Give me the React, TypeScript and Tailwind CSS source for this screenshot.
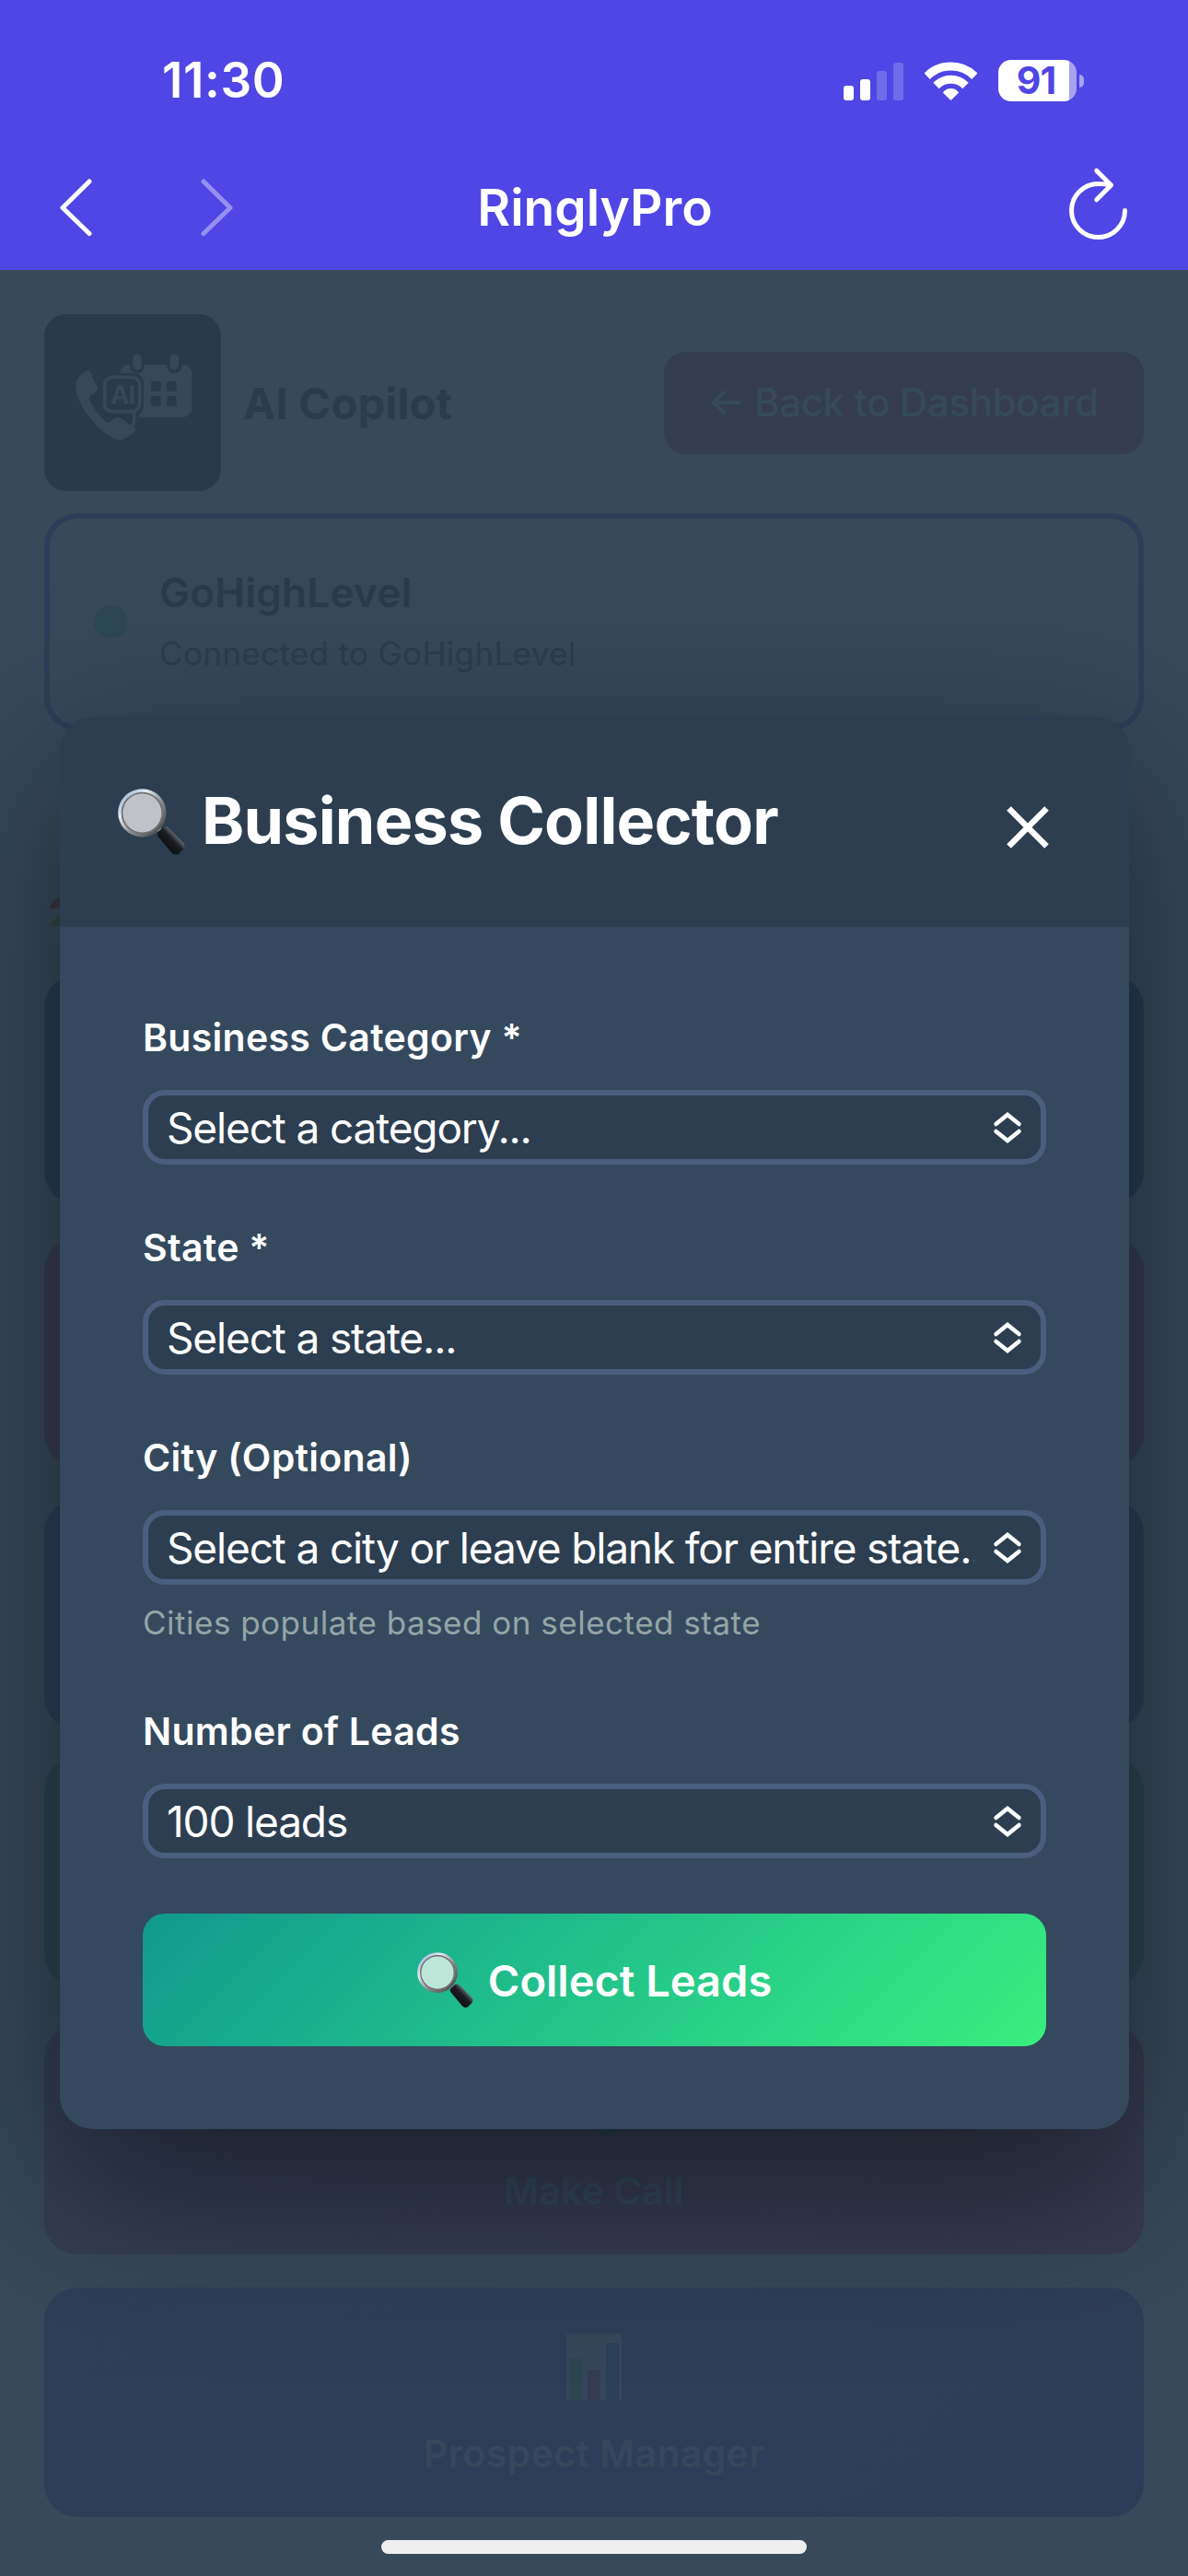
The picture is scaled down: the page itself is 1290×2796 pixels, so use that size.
import type { ReactNode } from 'react'

function StatusBar() {
  return (
    <div className="flex h-[174px] shrink-0 items-center justify-between pt-px pl-[176px] pr-[113px] text-white">
      <span className="text-[53px] leading-none font-semibold tracking-[0.6px]">11:30</span>
      <div className="flex items-center">
        <svg width="66" height="42" viewBox="0 0 66 42" fill="currentColor">
          <rect x="0" y="26" width="11" height="16" rx="3" />
          <rect x="18" y="19" width="11" height="23" rx="3" />
          <rect x="36" y="10" width="11" height="32" rx="3" opacity="0.2" />
          <rect x="54" y="1" width="11" height="41" rx="3" opacity="0.2" />
        </svg>
        <svg className="ml-[22px]" width="57" height="42" viewBox="0 0 57 42" fill="none" stroke="currentColor" strokeWidth="9">
          <path d="M2.6 15.7 A36.9 36.9 0 0 1 54.4 15.7" />
          <path d="M12.5 26 A22.6 22.6 0 0 1 44.5 26" />
          <path d="M28.5 42 L19.8 33.4 Q23.5 29 28.5 29 Q33.5 29 37.2 33.4 Z" fill="currentColor" stroke="none" />
        </svg>
        <div className="ml-[23px] flex h-[45px] w-[85px] rounded-[14px] bg-linear-to-r from-white from-[77px] to-white/50 to-[77px]">
          <span className="w-[82px] text-center text-[41px] leading-[45px] font-bold tracking-[-0.8px] text-[#4f46e5]">91</span>
        </div>
        <div className="ml-[3px] h-[14px] w-[5px] rounded-r-full bg-white/50" />
      </div>
    </div>
  )
}

function NavBar() {
  return (
    <div className="flex h-[102px] items-center text-white">
      <svg className="ml-[64px]" width="37" height="64" viewBox="0 0 37 64" fill="none" stroke="currentColor" strokeWidth="5" strokeLinecap="round" strokeLinejoin="round">
        <path d="M33 4 L4 32.5 L33 60.5" />
      </svg>
      <svg className="ml-[116px] opacity-40" width="37" height="64" viewBox="0 0 37 64" fill="none" stroke="currentColor" strokeWidth="5" strokeLinecap="round" strokeLinejoin="round">
        <path d="M4 4 L33 32.5 L4 60.5" />
      </svg>
      <h1 className="ml-[264px] w-[256px] text-center text-[55px] leading-none font-semibold">RinglyPro</h1>
      <svg className="mb-[6px] ml-[386px]" width="66" height="82" viewBox="0 0 66 82" fill="none" stroke="currentColor" strokeWidth="5" strokeLinecap="round" strokeLinejoin="round">
        <path d="M61.5 47.5 A29 29 0 1 1 32.5 18.5 Q40 18.5 46 20" />
        <path d="M30.7 4.2 L46.5 20 L30.7 35.8" />
      </svg>
    </div>
  )
}

function Logo() {
  return (
    <svg className="rounded-[24px] bg-[#2a3a4a]" width="192" height="192" viewBox="-36 -87 576 576">
      <g fill="#364859">
        <rect x="210" y="78" width="235" height="170" rx="28" />
        <g fill="#364859" stroke="#2a3a4a" strokeWidth="10">
          <rect x="248" y="38" width="38" height="62" rx="19" />
          <rect x="369" y="38" width="38" height="62" rx="19" />
        </g>
        <g fill="#2a3a4a">
          <rect x="312" y="132" width="32" height="33" rx="6" />
          <rect x="363" y="132" width="32" height="33" rx="6" />
          <rect x="312" y="180" width="32" height="33" rx="6" />
          <rect x="363" y="180" width="32" height="33" rx="6" />
          <rect x="149" y="105" width="139" height="138" rx="34" />
          <path d="M205 200 H288 L264 262 H205 Z" />
        </g>
        <path d="M104 96 Q111 95 115 102 L137 152 Q140 160 132 166 L114 180 Q108 186 112 194 Q134 236 166 264 Q173 269 180 263 L192 252 Q203 244 214 252 L258 282 Q265 288 259 294 Q245 309 224 319 Q209 327 192 318 Q146 298 102 237 Q66 184 66 146 Q68 114 104 96 Z" />
        <path d="M256 232 Q262 262 249 283" fill="none" stroke="#364859" strokeWidth="11" />
        <rect x="161" y="118" width="114" height="112" rx="24" fill="#2a3a4a" stroke="#364859" strokeWidth="11" />
        <text x="219" y="204" textAnchor="middle" fontSize="82" fontWeight="700" fontFamily="Inter, sans-serif" letterSpacing="-3">AI</text>
      </g>
    </svg>
  )
}

function Magnifier({ size, lens }: { size: number; lens: string }) {
  return (
    <svg width={size} height={size} viewBox="0 0 72 72" className="shrink-0">
      <defs>
        <linearGradient id="rim" x1="0" y1="0" x2="1" y2="1">
          <stop offset="0" stopColor="#7fa9d8" />
          <stop offset="0.3" stopColor="#e4eaf0" />
          <stop offset="0.6" stopColor="#85878a" />
          <stop offset="1" stopColor="#3c3d40" />
        </linearGradient>
        <linearGradient id="grip" x1="0" y1="1" x2="1" y2="0">
          <stop offset="0.2" stopColor="#07080a" />
          <stop offset="0.55" stopColor="#1c1f23" />
          <stop offset="0.7" stopColor="#686d73" />
          <stop offset="1" stopColor="#0b0c0e" />
        </linearGradient>
      </defs>
      <path d="M41 44 L47 50 L50 46 L44 41 Z" fill="#b5b8bb" />
      <circle cx="26" cy="26" r="24" fill={lens} stroke="url(#rim)" strokeWidth="3.6" />
      <circle cx="26" cy="26" r="21.6" fill="none" stroke="#6e6c6b" strokeWidth="1.6" />
      <path d="M43 51 Q41 48 44 45 L49 41 Q52 40 54 42 L70 58 Q73 61 70 65 L65 70 Q62 72 58 69 Z" fill="url(#grip)" />
    </svg>
  )
}

function ActionCard({ className, children }: { className: string; children?: ReactNode }) {
  return (
    <div className={`flex h-[249px] w-full shrink-0 flex-col items-center rounded-[36px] pt-[50px] ${className}`}>
      {children}
    </div>
  )
}

function Dashboard() {
  return (
    <div className="flex flex-col px-12 pt-12">
      <div className="flex items-center">
        <Logo />
        <span className="ml-[24px] text-[47px] leading-none font-bold tracking-[0.3px] text-[#2c3b4e]">AI Copilot</span>
        <div className="ml-auto flex h-[111px] w-[521px] items-center rounded-[24px] bg-[#363d4e] pl-[51px] text-[#364a5c]">
          <svg width="34" height="28" viewBox="0 0 34 28" fill="none" stroke="currentColor" strokeWidth="4" strokeLinecap="round" strokeLinejoin="round">
            <path d="M14 3 L3 14 L14 25 M3 14 H31" />
          </svg>
          <span className="ml-[13px] text-[42px] leading-none font-medium tracking-[-0.35px] whitespace-nowrap">Back to Dashboard</span>
        </div>
      </div>

      <div className="mt-6 flex h-[236px] items-center rounded-[36px] border-[6px] border-[#2c3f5a] pl-12">
        <div className="h-9 w-9 rounded-full bg-[#2d4853]" />
        <div className="ml-[35px] flex flex-col gap-[24px]">
          <span className="text-[44px] leading-[44px] font-semibold tracking-[0.3px] text-[#2b3b4e]">GoHighLevel</span>
          <span className="text-[35px] leading-[40px] tracking-[0.35px] text-[#2a3f4e]">Connected to GoHighLevel</span>
        </div>
      </div>

      <div className="mt-[168px] flex h-[97px]">
        <svg width="60" height="54" viewBox="0 0 60 54">
          <path d="M5 26 Q9 14 24 10 V22 Z" fill="#3b3440" />
          <path d="M7 45 Q10 33 26 28 V41 Z" fill="#334642" />
        </svg>
      </div>

      <div className="flex flex-col gap-9">
        <ActionCard className="bg-[#283d53]" />
        <ActionCard className="bg-[#373c51]" />
        <ActionCard className="bg-[#2d3d57]" />
        {/* active card is lifted a little */}
        <ActionCard className="-mt-[6px] mb-[6px] bg-[#2b4551]" />
        <ActionCard className="bg-linear-135 from-[#343e54] to-[#383b4f] text-[#34485a]">
          <svg width="72" height="72" viewBox="0 0 72 72" fill="#28404a">
            <path d="M30 55 H62 Q61 66 53 71 Q42 70 30 55 Z" />
          </svg>
          <span className="mt-[34px] text-[41px] leading-[48px] font-semibold tracking-[0.2px]">Make Call</span>
        </ActionCard>
        <ActionCard className="bg-linear-135 from-[#2d3f59] to-[#2f3c59] text-[#36485b]">
          <svg width="60" height="72" viewBox="0 0 60 72">
            <rect width="60" height="72" fill="#35475a" />
            <rect x="3" y="26" width="14" height="46" fill="#2c4750" />
            <rect x="23" y="39" width="14" height="33" fill="#373d50" />
            <rect x="43" y="10" width="14" height="62" fill="#2b4059" />
          </svg>
          <span className="mt-[34px] text-[41px] leading-[48px] font-semibold tracking-[0.4px]">Prospect Manager</span>
        </ActionCard>
      </div>
    </div>
  )
}

function Field({ label, value, hint }: { label: string; value: string; hint?: string }) {
  return (
    <div>
      <label className="block text-[41px] leading-[48px] font-semibold tracking-[0.3px]">{label}</label>
      <div className="mt-[33px] flex h-[81px] items-center rounded-[24px] border-[6px] border-[#4a5f80] bg-[#2c3e50] pr-5 pl-5">
        <div className="w-[877px] overflow-hidden text-[46px] leading-[60px] tracking-[-1.15px] whitespace-nowrap">{value}</div>
        <svg className="ml-auto" width="32" height="36" viewBox="0 0 32 36" fill="none" stroke="currentColor" strokeWidth="4.5" strokeLinecap="round" strokeLinejoin="miter">
          <path d="M3.5 14 L16 4 L28.5 14 M3.5 22 L16 32 L28.5 22" />
        </svg>
      </div>
      {hint && <p className="mt-[17px] mb-1 text-[35px] leading-[48px] tracking-[0.5px] text-[#95a5a6]">{hint}</p>}
    </div>
  )
}

const fields = [
  { label: 'Business Category *', value: 'Select a category...' },
  { label: 'State *', value: 'Select a state...' },
  {
    label: 'City (Optional)',
    value: 'Select a city or leave blank for entire state...',
    hint: 'Cities populate based on selected state',
  },
  { label: 'Number of Leads', value: '100 leads' },
]

function CollectorModal() {
  return (
    <div className="w-[1161px] rounded-[36px] bg-[#34495e] text-white shadow-[0_60px_180px_rgba(0,0,0,0.5)]">
      <div className="flex h-[228px] items-center rounded-t-[36px] bg-[#2c3e50] pl-[63px]">
        <Magnifier size={73} lens="#bfc3c9" />
        <h2 className="mb-[3px] ml-[18px] text-[70px] leading-none font-bold tracking-[-0.8px] whitespace-nowrap">Business Collector</h2>
        <svg className="mt-3 mr-[87px] ml-auto" width="46" height="46" viewBox="0 0 46 46" stroke="currentColor" strokeWidth="6.5">
          <path d="M2.5 2.5 L43.5 43.5 M43.5 2.5 L2.5 43.5" />
        </svg>
      </div>
      <div className="px-[90px] pt-24 pb-[90px]">
        <div className="flex flex-col gap-[66px]">
          {fields.map((f) => (
            <Field key={f.label} {...f} />
          ))}
        </div>
        <button className="mt-[60px] flex h-36 w-full items-center justify-center rounded-[24px] bg-linear-135 from-[#11998e] to-[#38ef7d]">
          <Magnifier size={61} lens="#bce6d8" />
          <span className="ml-[16px] text-[47px] leading-none font-semibold">Collect Leads</span>
        </button>
      </div>
    </div>
  )
}

export default function App() {
  return (
    <div className="flex h-[2796px] w-[1290px] flex-col overflow-hidden bg-[#38495a] font-[Inter,sans-serif]">
      <header className="h-[293px] shrink-0 bg-[#4f46e5]">
        <StatusBar />
        <NavBar />
      </header>
      <main className="relative flex-1 overflow-hidden">
        <Dashboard />
        <div className="absolute inset-0 flex items-start pt-[485px] pl-[65px]">
          <CollectorModal />
        </div>
        <div className="absolute bottom-6 left-[414px] h-[15px] w-[462px] rounded-full bg-[#eeeeee]" />
      </main>
    </div>
  )
}
